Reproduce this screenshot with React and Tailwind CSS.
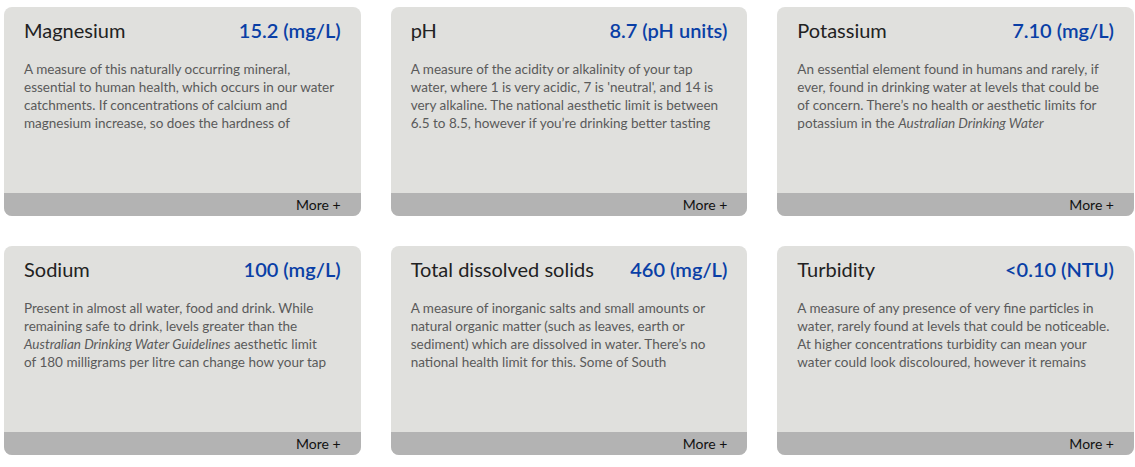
import React from "react";

const cards = [
  {
    title: "Magnesium",
    value: "15.2 (mg/L)",
    lines: [
      "A measure of this naturally occurring mineral,",
      "essential to human health, which occurs in our water",
      "catchments. If concentrations of calcium and",
      "magnesium increase, so does the hardness of",
    ],
  },
  {
    title: "pH",
    value: "8.7 (pH units)",
    lines: [
      "A measure of the acidity or alkalinity of your tap",
      "water, where 1 is very acidic, 7 is 'neutral', and 14 is",
      "very alkaline. The national aesthetic limit is between",
      "6.5 to 8.5, however if you\u2019re drinking better tasting",
    ],
  },
  {
    title: "Potassium",
    value: "7.10 (mg/L)",
    lines: [
      "An essential element found in humans and rarely, if",
      "ever, found in drinking water at levels that could be",
      "of concern. There\u2019s no health or aesthetic limits for",
      <>potassium in the <em>Australian Drinking Water</em></>,
    ],
  },
  {
    title: "Sodium",
    value: "100 (mg/L)",
    lines: [
      "Present in almost all water, food and drink. While",
      "remaining safe to drink, levels greater than the",
      <><em>Australian Drinking Water Guidelines</em> aesthetic limit</>,
      "of 180 milligrams per litre can change how your tap",
    ],
  },
  {
    title: "Total dissolved solids",
    value: "460 (mg/L)",
    lines: [
      "A measure of inorganic salts and small amounts or",
      "natural organic matter (such as leaves, earth or",
      "sediment) which are dissolved in water. There\u2019s no",
      "national health limit for this. Some of South",
    ],
  },
  {
    title: "Turbidity",
    value: "<0.10 (NTU)",
    lines: [
      "A measure of any presence of very fine particles in",
      "water, rarely found at levels that could be noticeable.",
      "At higher concentrations turbidity can mean your",
      "water could look discoloured, however it remains",
    ],
  },
];

function Card({ c }) {
  return (
    <div className="flex h-[209px] flex-col overflow-hidden rounded-[8px] bg-[#e0e0dd]">
      <div className="flex-1 px-5 pt-[11px]">
        <div className="flex items-baseline justify-between">
          <span className="text-[20px] leading-[24px] text-[#222222]">{c.title}</span>
          <span className="text-[20px] leading-[24px] font-semibold text-[#0a3fa6]">{c.value}</span>
        </div>
        <div className="mt-[18px] text-[13.5px] leading-[18px] text-[#5a5a5a]">
          {c.lines.map((l, i) => (
            <div key={i} className="whitespace-nowrap">{l}</div>
          ))}
        </div>
      </div>
      <div className="flex h-[23px] items-center justify-end bg-[#b3b3b3] px-5 text-[14px] text-[#111111]">
        More +
      </div>
    </div>
  );
}

export default function App() {
  return (
    <div
      className="min-h-[467px] bg-white pl-[4px] pr-[1px] pt-[7px]"
      style={{ fontFamily: "Lato, 'Noto Sans', sans-serif" }}
    >
      <div className="grid grid-cols-3 gap-x-[30px] gap-y-[30px]">
        {cards.map((c, i) => (
          <Card key={i} c={c} />
        ))}
      </div>
    </div>
  );
}
